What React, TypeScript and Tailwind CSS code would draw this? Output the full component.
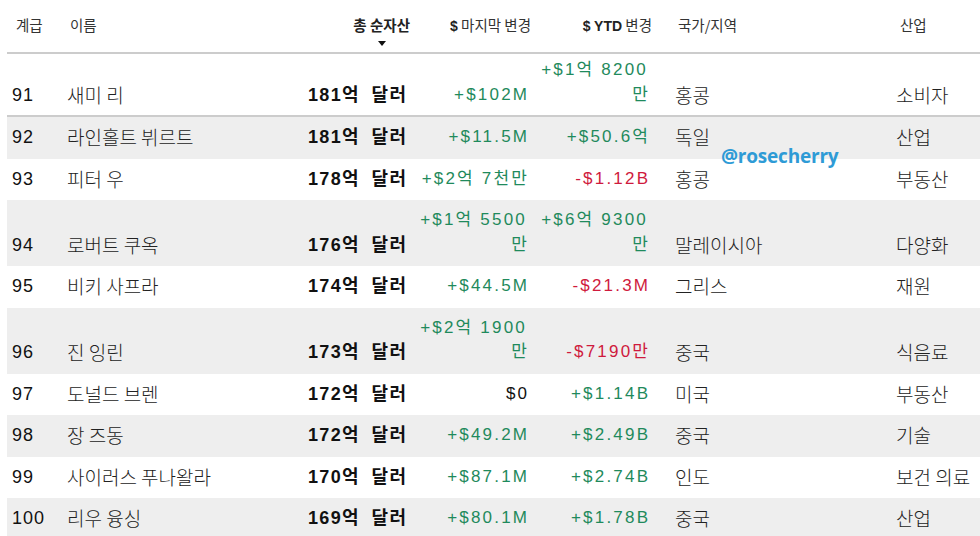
import React from "react";

type Row = {
  rank: number;
  name: string;
  worth: string;
  last: string;
  lastColor: "g" | "r" | "k";
  ytd: string;
  ytdColor: "g" | "r" | "k";
  country: string;
  industry: string;
};

const rows: Row[] = [
  { rank: 91, name: "새미 리", worth: "181억 달러", last: "+$102M", lastColor: "g", ytd: "+$1억 8200 만", ytdColor: "g", country: "홍콩", industry: "소비자" },
  { rank: 92, name: "라인홀트 뷔르트", worth: "181억 달러", last: "+$11.5M", lastColor: "g", ytd: "+$50.6억", ytdColor: "g", country: "독일", industry: "산업" },
  { rank: 93, name: "피터 우", worth: "178억 달러", last: "+$2억 7천만", lastColor: "g", ytd: "-$1.12B", ytdColor: "r", country: "홍콩", industry: "부동산" },
  { rank: 94, name: "로버트 쿠옥", worth: "176억 달러", last: "+$1억 5500 만", lastColor: "g", ytd: "+$6억 9300 만", ytdColor: "g", country: "말레이시아", industry: "다양화" },
  { rank: 95, name: "비키 사프라", worth: "174억 달러", last: "+$44.5M", lastColor: "g", ytd: "-$21.3M", ytdColor: "r", country: "그리스", industry: "재원" },
  { rank: 96, name: "진 잉린", worth: "173억 달러", last: "+$2억 1900 만", lastColor: "g", ytd: "-$7190만", ytdColor: "r", country: "중국", industry: "식음료" },
  { rank: 97, name: "도널드 브렌", worth: "172억 달러", last: "$0", lastColor: "k", ytd: "+$1.14B", ytdColor: "g", country: "미국", industry: "부동산" },
  { rank: 98, name: "장 즈동", worth: "172억 달러", last: "+$49.2M", lastColor: "g", ytd: "+$2.49B", ytdColor: "g", country: "중국", industry: "기술" },
  { rank: 99, name: "사이러스 푸나왈라", worth: "170억 달러", last: "+$87.1M", lastColor: "g", ytd: "+$2.74B", ytdColor: "g", country: "인도", industry: "보건 의료" },
  { rank: 100, name: "리우 융싱", worth: "169억 달러", last: "+$80.1M", lastColor: "g", ytd: "+$1.78B", ytdColor: "g", country: "중국", industry: "산업" },
];

const sans = "font-['Liberation_Sans','Noto_Sans_CJK_KR',sans-serif]";
const kr = "font-['Noto_Sans_CJK_KR',sans-serif]";

function colorCls(c: "g" | "r" | "k") {
  if (c === "g") return "text-[#1f8a5c]";
  if (c === "r") return "text-[#cf1a3d]";
  return "text-[#111]";
}

export default function App() {
  return (
    <div className="relative w-[980px] h-[536px] overflow-hidden bg-white">
      <table className={`ml-[7px] w-[973px] table-fixed border-collapse ${sans}`}>
        <colgroup>
          <col className="w-[55px]" />
          <col className="w-[228px]" />
          <col className="w-[120px]" />
          <col className="w-[121px]" />
          <col className="w-[121px]" />
          <col className="w-[239px]" />
          <col className="w-[89px]" />
        </colgroup>
        <thead>
          <tr className="h-[53px] border-b-2 border-[#cccccc] text-[14px] text-[#333] align-top">
            <th className={`pl-[9px] pt-[14px] text-left font-normal text-[14.5px] ${kr}`}>계급</th>
            <th className={`pl-[8px] pt-[14px] text-left font-normal text-[14.5px] ${kr}`}>이름</th>
            <th className="pt-[14px] text-right font-normal">
              <div className="inline-flex flex-col items-center">
                <span className={`${kr} font-bold text-[14.5px] text-[#222]`}>총 순자산</span>
                <span className="mt-[5px] w-0 h-0 border-l-[4.5px] border-r-[4.5px] border-t-[5px] border-l-transparent border-r-transparent border-t-[#111]" />
              </div>
            </th>
            <th className="pt-[14px] pr-[-2px] text-right font-normal whitespace-nowrap">
              <span className="font-bold text-[#222]">$</span>
              <span className={`${kr} text-[14.5px]`}> 마지막 변경</span>
            </th>
            <th className="pt-[14px] text-right font-normal whitespace-nowrap">
              <span className="font-bold text-[#222]">$ YTD</span>
              <span className={`${kr} text-[14.5px]`}> 변경</span>
            </th>
            <th className={`pl-[26px] pt-[14px] text-left font-normal text-[14.5px] ${kr}`}>국가/지역</th>
            <th className={`pl-[9px] pt-[14px] text-left font-normal text-[14.5px] ${kr}`}>산업</th>
          </tr>
        </thead>
        <tbody>
          {rows.map((r, i) => {
            const first = i === 0;
            const gray = i % 2 === 1;
            const pad = first ? "pt-[4px] pb-[8px]" : "pt-[8px] pb-[9px]";
            return (
              <tr
                key={r.rank}
                className={`${gray ? "bg-[#eeeeee]" : "bg-white"} ${first ? "border-b-2 border-[#cccccc]" : ""} align-bottom text-[17px] leading-[24.5px] text-[#1a1a1a]`}
              >
                <td className={`pl-[5px] ${pad} text-[18px] tracking-[1px] text-[#111]`}>{r.rank}</td>
                <td className={`pl-[5px] ${pad} ${kr} font-light text-[19px] text-[#222] whitespace-nowrap`}>{r.name}</td>
                <td className={`pr-[4px] ${pad} text-right font-bold text-[18px] whitespace-nowrap text-[#111]`}>
                  <span className="tracking-[1.4px] [word-spacing:5px] -mr-[1.4px]">{r.worth}</span>
                </td>
                <td className={`pr-[4px] ${pad} text-right tracking-[2.2px] ${colorCls(r.lastColor)}`}>
                  <span className="-mr-[2.2px]">{r.last}</span>
                </td>
                <td className={`pr-[4px] ${pad} text-right tracking-[2.2px] ${colorCls(r.ytdColor)}`}>
                  <span className="-mr-[2.2px]">{r.ytd}</span>
                </td>
                <td className={`pl-[23px] ${pad} ${kr} font-light text-[19px] text-[#222] whitespace-nowrap`}>{r.country}</td>
                <td className={`pl-[5px] ${pad} ${kr} font-light text-[19px] text-[#222] whitespace-nowrap`}>{r.industry}</td>
              </tr>
            );
          })}
        </tbody>
      </table>
      <div className="absolute left-[721px] top-[142px] text-[19px] font-bold text-[#2e9bd6] font-['Open_Sans',sans-serif] tracking-[-0.2px] pointer-events-none">
        @rosecherry
      </div>
    </div>
  );
}
